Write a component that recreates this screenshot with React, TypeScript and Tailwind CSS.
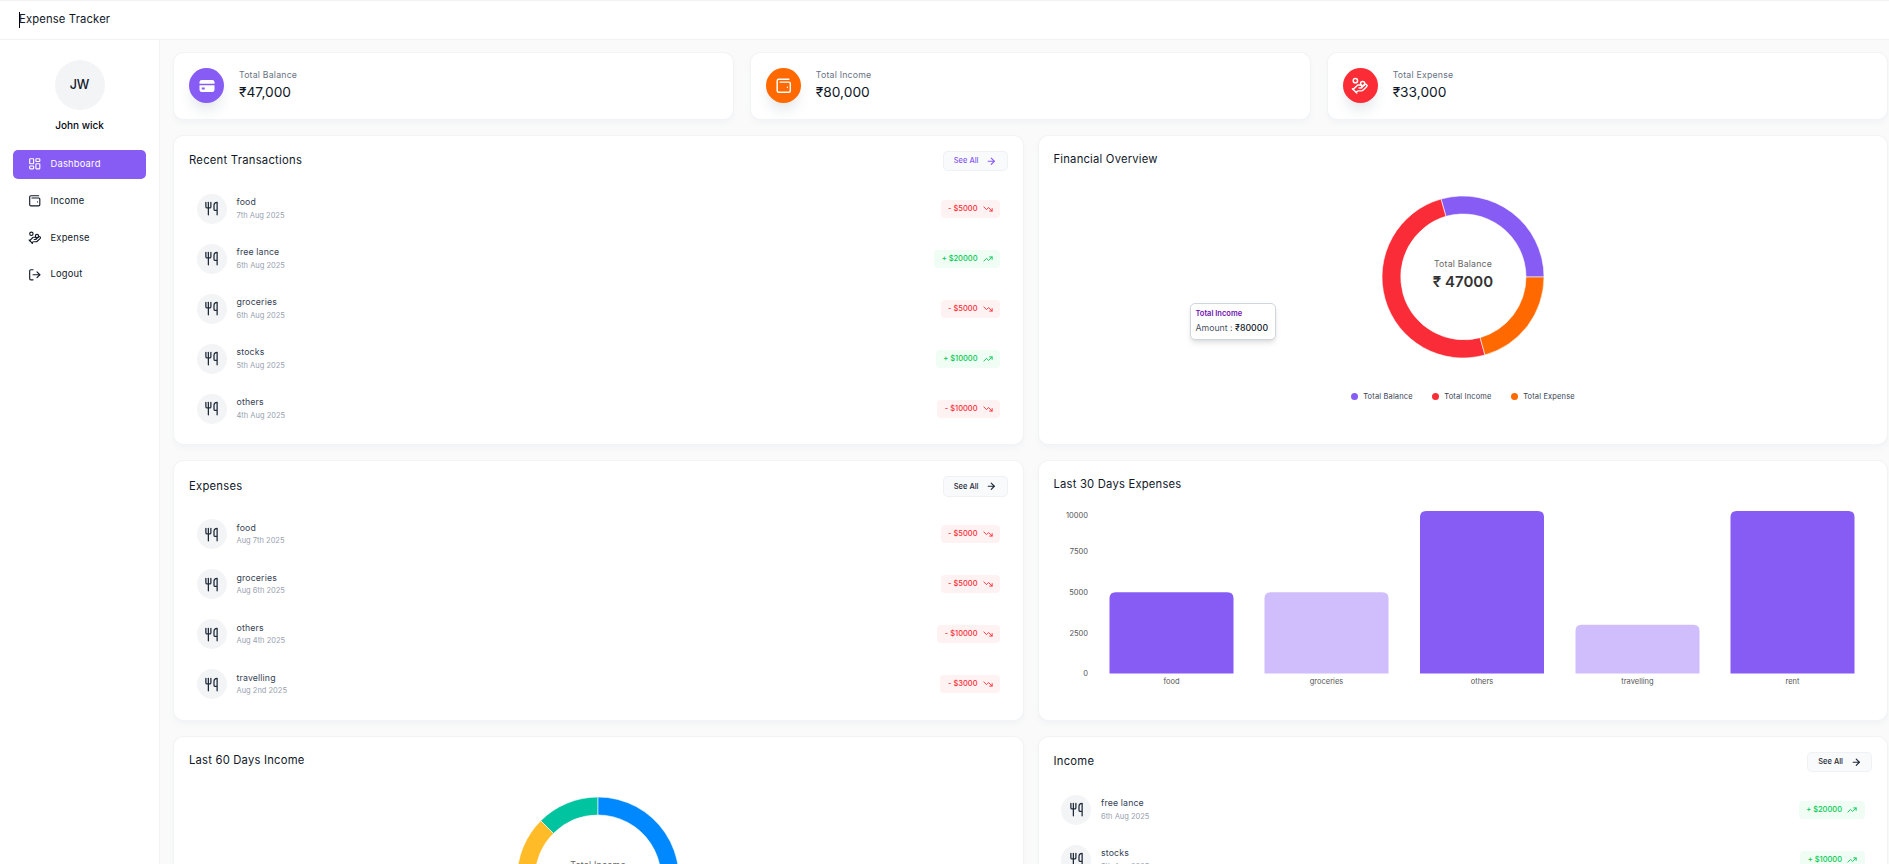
import type { ReactNode } from "react";
import {
  LuArrowRight,
  LuHandCoins,
  LuLayoutDashboard,
  LuLogOut,
  LuTrendingDown,
  LuTrendingUp,
  LuUtensils,
  LuWalletMinimal,
} from "react-icons/lu";

// ── Data ──────────────────────────────────────────────────────────────────────

type Tx = { title: string; date: string; amount: number; kind: "income" | "expense" };

const recent: Tx[] = [
  { title: "food", date: "7th Aug 2025", amount: 5000, kind: "expense" },
  { title: "free lance", date: "6th Aug 2025", amount: 20000, kind: "income" },
  { title: "groceries", date: "6th Aug 2025", amount: 5000, kind: "expense" },
  { title: "stocks", date: "5th Aug 2025", amount: 10000, kind: "income" },
  { title: "others", date: "4th Aug 2025", amount: 10000, kind: "expense" },
];

const expenses: Tx[] = [
  { title: "food", date: "Aug 7th 2025", amount: 5000, kind: "expense" },
  { title: "groceries", date: "Aug 6th 2025", amount: 5000, kind: "expense" },
  { title: "others", date: "Aug 4th 2025", amount: 10000, kind: "expense" },
  { title: "travelling", date: "Aug 2nd 2025", amount: 3000, kind: "expense" },
];

const incomes: Tx[] = [
  { title: "free lance", date: "6th Aug 2025", amount: 20000, kind: "income" },
  { title: "stocks", date: "5th Aug 2025", amount: 10000, kind: "income" },
];

const bars = [
  { label: "food", x: 55.5, value: 5000, color: "#875cf5" },
  { label: "groceries", x: 210.5, value: 5000, color: "#cfbefb" },
  { label: "others", x: 366, value: 10000, color: "#875cf5" },
  { label: "travelling", x: 521.5, value: 3000, color: "#cfbefb" },
  { label: "rent", x: 676.5, value: 10000, color: "#875cf5" },
];

// ── Small parts ───────────────────────────────────────────────────────────────

function CardIcon() {
  // filled card: top band, stripe gap, lower body with a chip cut out
  return (
    <svg viewBox="0 0 24 24" className="size-[18px]" fill="currentColor">
      <path d="M5 4h14a3 3 0 0 1 3 3v2H2V7a3 3 0 0 1 3-3z" />
      <path
        fillRule="evenodd"
        d="M2 11h20v6a3 3 0 0 1-3 3H5a3 3 0 0 1-3-3v-6zm3 3v2.5h4V14H5z"
      />
    </svg>
  );
}

function Card({ children, className = "" }: { children: ReactNode; className?: string }) {
  return (
    <div className={`relative rounded-[10px] border border-gray-200/50 bg-white p-[15px] shadow-md shadow-gray-100 ${className}`}>
      {children}
    </div>
  );
}

function SeeAll({ accent = false }: { accent?: boolean }) {
  return (
    <button
      className={`flex h-[20.5px] items-center gap-[7.5px] rounded-[5px] border border-gray-200/50 bg-gray-50 px-[10px] text-[7.5px] font-medium ${
        accent ? "text-[#875cf5]" : "text-gray-800"
      }`}
    >
      See All <LuArrowRight className="size-[10.5px]" strokeWidth={2.6} />
    </button>
  );
}

function Row({ tx }: { tx: Tx }) {
  const income = tx.kind === "income";
  return (
    <div className="flex items-center gap-[10px] px-[7.5px] py-[10px]">
      <div className="flex size-[30px] shrink-0 items-center justify-center rounded-full bg-gray-100 text-gray-800">
        <LuUtensils className="size-[15px]" />
      </div>
      <div className="flex flex-1 items-center justify-between">
        <div>
          <p className="text-[8.75px] leading-[12.5px] tracking-[0.15px] text-gray-700">{tx.title}</p>
          <p className="mt-[2px] text-[7.5px] leading-[10px] text-gray-400">{tx.date}</p>
        </div>
        <div
          className={`flex h-[18px] items-center gap-[5px] rounded-[4px] px-[7.5px] ${
            income ? "bg-green-50 text-green-500" : "bg-red-50 text-red-500"
          }`}
        >
          <span className="text-[7.5px] font-medium">
            {income ? "+" : "-"} ${tx.amount}
          </span>
          {income ? (
            <LuTrendingUp className="size-[10px]" strokeWidth={2.2} />
          ) : (
            <LuTrendingDown className="size-[10px]" strokeWidth={2.2} />
          )}
        </div>
      </div>
    </div>
  );
}

function TxCard({ title, rows, accent }: { title: string; rows: Tx[]; accent?: boolean }) {
  return (
    <Card className="pb-[10.5px]">
      <div className="flex items-center justify-between">
        <h5 className="text-[11.25px] tracking-[0.25px] text-gray-900">{title}</h5>
        <SeeAll accent={accent} />
      </div>
      <div className="mt-[12.5px]">
        {rows.map((tx) => (
          <Row key={tx.title} tx={tx} />
        ))}
      </div>
    </Card>
  );
}

function arc(cx: number, cy: number, r0: number, r1: number, from: number, to: number) {
  const pt = (r: number, a: number) => {
    const rad = (a * Math.PI) / 180;
    return `${(cx + r * Math.cos(rad)).toFixed(2)} ${(cy - r * Math.sin(rad)).toFixed(2)}`;
  };
  const large = to - from > 180 ? 1 : 0;
  return `M${pt(r1, from)} A${r1} ${r1} 0 ${large} 0 ${pt(r1, to)} L${pt(r0, to)} A${r0} ${r0} 0 ${large} 1 ${pt(r0, from)} Z`;
}

function Donut({
  start,
  slices,
  label,
  value,
}: {
  start: number;
  slices: { value: number; color: string }[];
  label: string;
  value: string;
}) {
  const total = slices.reduce((sum, s) => sum + s.value, 0);
  let angle = start;
  return (
    <svg width="240" height="200" viewBox="0 0 240 200" className="mx-auto block">
      {slices.map((s) => {
        const from = angle;
        angle += (s.value / total) * 360;
        return <path key={s.color} d={arc(120, 100, 63, 81, from, angle)} fill={s.color} stroke="#fff" strokeWidth="0.6" />;
      })}
      <text x="120" y="89.5" textAnchor="middle" fontSize="8.75" letterSpacing="0.2" fill="#666">
        {label}
      </text>
      <text x="120" y="109.5" textAnchor="middle" fontSize="15" fontWeight="600" fill="#333">
        {value}
      </text>
    </svg>
  );
}

function barPath(x: number, top: number, width: number, base: number, r: number) {
  return `M${x} ${base} V${top + r} Q${x} ${top} ${x + r} ${top} H${x + width - r} Q${x + width} ${top} ${x + width} ${top + r} V${base} Z`;
}

function BarChart() {
  const base = 173.6;
  const span = 162.6;
  return (
    <svg width="818" height="200" viewBox="0 0 818 200" className="mt-[6.5px] block">
      {[
        { t: "10000", y: 15 },
        { t: "7500", y: 51 },
        { t: "5000", y: 92 },
        { t: "2500", y: 133 },
        { t: "0", y: 173 },
      ].map((tick) => (
        <text key={tick.t} x="34" y={tick.y + 2.7} textAnchor="end" fontSize="7.5" fill="#555">
          {tick.t}
        </text>
      ))}
      {bars.map((b) => (
        <g key={b.label}>
          <path d={barPath(b.x, base - (b.value / 10000) * span, 124, base, 6)} fill={b.color} />
          <text x={b.x + 62} y="184.2" textAnchor="middle" fontSize="7.5" fill="#555">
            {b.label}
          </text>
        </g>
      ))}
    </svg>
  );
}

function Stat({ icon, label, value, color }: { icon: ReactNode; label: string; value: string; color: string }) {
  return (
    <Card className="flex h-[67.5px] items-center gap-[15px]">
      <div className={`flex size-[35px] items-center justify-center rounded-full text-white shadow-lg shadow-gray-200 ${color}`}>
        {icon}
      </div>
      <div className="pb-[1.5px]">
        <p className="mb-[2.5px] text-[8.75px] leading-[12.5px] tracking-[0.2px] text-gray-500">{label}</p>
        <p className="text-[13.75px] leading-[17.5px] text-gray-900">{value}</p>
      </div>
    </Card>
  );
}

function NavItem({ icon, label, active }: { icon: ReactNode; label: string; active?: boolean }) {
  return (
    <button
      className={`flex h-[29px] w-full items-center gap-[9.5px] rounded-[5px] px-[14.5px] text-[9.375px] tracking-[0.2px] ${
        active ? "bg-[#875cf5] text-white" : "text-gray-900"
      }`}
    >
      {icon}
      {label}
    </button>
  );
}

// ── Page ──────────────────────────────────────────────────────────────────────

export default function App() {
  return (
    <div className="flex h-screen flex-col overflow-hidden bg-[#fafafa] font-['Inter',sans-serif]">
      <header className="relative flex h-[39.5px] shrink-0 items-center border-y border-gray-200/50 bg-white pl-[19px]">
        <h1 className="text-[11.25px] tracking-[0.15px] text-gray-900">Expense Tracker</h1>
        <span className="absolute top-[11px] left-[19px] h-[16px] w-px bg-black" />
      </header>

      <div className="flex min-h-0 flex-1">
        <aside className="flex w-[160px] shrink-0 flex-col items-center border-r border-gray-200/50 bg-white px-[13px] pt-[20.5px]">
          <div className="flex size-[50px] items-center justify-center rounded-full bg-gray-100 text-[12.5px] font-medium text-gray-900">
            JW
          </div>
          <h5 className="mt-[7.5px] mb-[17px] text-[10px] leading-[15px] font-medium text-gray-950">John wick</h5>
          <nav className="flex w-full flex-col gap-[7.8px]">
            <NavItem active label="Dashboard" icon={<LuLayoutDashboard className="size-[13.5px]" />} />
            <NavItem label="Income" icon={<LuWalletMinimal className="size-[13.5px]" />} />
            <NavItem label="Expense" icon={<LuHandCoins className="size-[13.5px]" />} />
            <NavItem label="Logout" icon={<LuLogOut className="size-[13.5px]" />} />
          </nav>
        </aside>

        <main className="min-w-0 flex-1 pt-[12.5px] pr-px pl-[13px]">
          <div className="grid grid-cols-3 gap-[15.5px]">
            <Stat color="bg-[#875cf5]" label="Total Balance" value="₹47,000" icon={<CardIcon />} />
            <Stat color="bg-orange-500" label="Total Income" value="₹80,000" icon={<LuWalletMinimal className="size-[17.5px]" />} />
            <Stat color="bg-red-500" label="Total Expense" value="₹33,000" icon={<LuHandCoins className="size-[17.5px]" />} />
          </div>

          <div className="mt-[15px] grid grid-cols-2 gap-x-[14px] gap-y-[15px]">
            <TxCard title="Recent Transactions" rows={recent} accent />

            <Card>
              <h5 className="text-[11.25px] leading-[17px] tracking-[0.2px] text-gray-900">Financial Overview</h5>
              <div className="mt-[9px]">
                <Donut
                  start={0}
                  label="Total Balance"
                  value="₹ 47000"
                  slices={[
                    { value: 47000, color: "#875cf5" },
                    { value: 80000, color: "#fa2c37" },
                    { value: 33000, color: "#ff6900" },
                  ]}
                />
              </div>
              <div className="mt-[14px] flex justify-center gap-[19px] text-[7.5px] leading-[12px] tracking-[0.15px] text-gray-700">
                {[
                  { name: "Total Balance", dot: "bg-[#875cf5]" },
                  { name: "Total Income", dot: "bg-[#fa2c37]" },
                  { name: "Total Expense", dot: "bg-[#ff6900]" },
                ].map((item) => (
                  <span key={item.name} className="flex items-center gap-[5px]">
                    <i className={`size-[7.5px] rounded-full ${item.dot}`} />
                    {item.name}
                  </span>
                ))}
              </div>
              <div className="absolute top-[167px] left-[151px] w-[86px] rounded-[5px] border border-gray-300 bg-white px-[5px] py-[5px] shadow-md">
                <p className="mb-[3px] text-[7.5px] leading-[10px] font-semibold text-purple-800">Total Income</p>
                <p className="text-[8.75px] leading-[12.5px] text-gray-600">
                  Amount : <span className="font-medium text-gray-900">₹80000</span>
                </p>
              </div>
            </Card>

            <TxCard title="Expenses" rows={expenses} />

            <Card>
              <h5 className="text-[11.25px] leading-[17px] tracking-[0.2px] text-gray-900">Last 30 Days Expenses</h5>
              <BarChart />
            </Card>

            <Card>
              <h5 className="text-[11.25px] leading-[17px] tracking-[0.2px] text-gray-900">Last 60 Days Income</h5>
              <div className="mt-[9px]">
                <Donut
                  start={90}
                  label="Total Income"
                  value="₹ 80000"
                  slices={[
                    { value: 10000, color: "#00c49f" },
                    { value: 20000, color: "#ffbb28" },
                    { value: 50000, color: "#0088fe" },
                  ]}
                />
              </div>
            </Card>

            <TxCard title="Income" rows={incomes} />
          </div>
        </main>
      </div>
    </div>
  );
}
